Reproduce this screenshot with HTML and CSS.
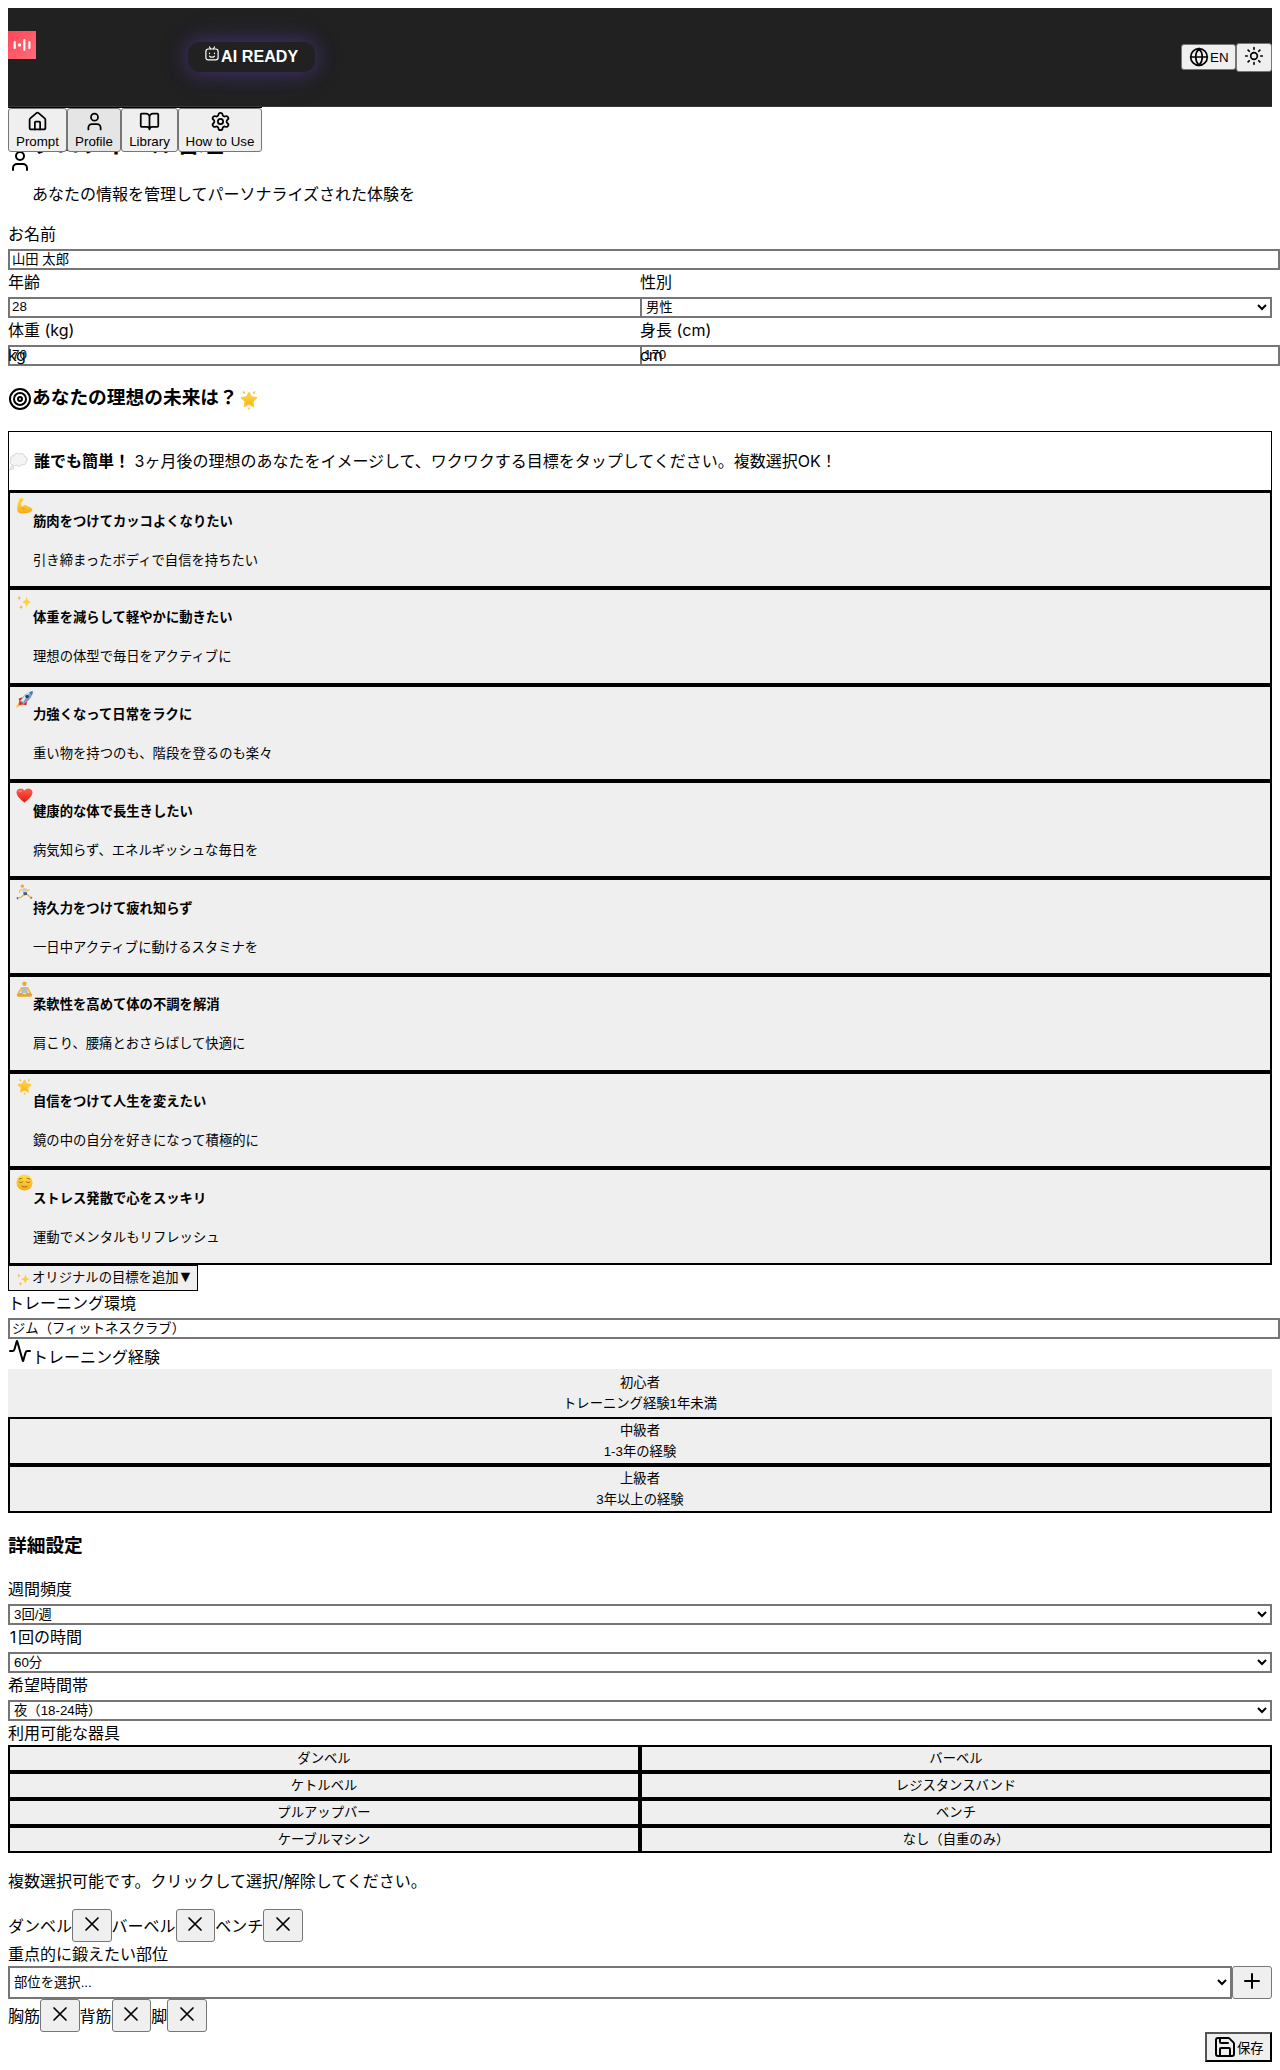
FILE: index.html
```html
<!DOCTYPE html>
<html lang="ja">
<head>
<meta charset="utf-8">
<title>プロフィール管理</title>
<link rel="stylesheet" href="styles.css">
</head>
<body>
<svg class="defs" aria-hidden="true">
  <defs>
    <linearGradient id="gold" x1="0" y1="0" x2="0" y2="1"><stop offset="0" stop-color="#ffe14d"/><stop offset="1" stop-color="#f9a816"/></linearGradient>
    <linearGradient id="logo" x1="0" y1="0" x2="1" y2="1"><stop offset="0" stop-color="#ff4757"/><stop offset="1" stop-color="#ff6b7a"/></linearGradient>
    <linearGradient id="red" x1="0" y1="0" x2="0" y2="1"><stop offset="0" stop-color="#ff6150"/><stop offset="1" stop-color="#e01a12"/></linearGradient>
  </defs>
  <symbol id="user" viewBox="0 0 24 24"><path d="M19 21v-2a4 4 0 0 0-4-4H9a4 4 0 0 0-4 4v2"/><circle cx="12" cy="7" r="4"/></symbol>
  <symbol id="close" viewBox="0 0 24 24"><path d="M18 6 6 18M6 6l12 12"/></symbol>
  <symbol id="star" viewBox="0 0 20 20"><path d="M10 2.800l2.300 4.300 5 .8-3.600 3.500.8 5L10 14.100l-4.500 2.300.8-5-3.600-3.500 5-.8z" fill="url(#gold)" stroke="#ffc83a" stroke-width="1.600" stroke-linejoin="round"/><path d="M4.500 2l.7 1.200M15.500 2l-.7 1.200M10 18.200v.6" stroke="#f8b62c" stroke-width="1.500" stroke-linecap="round"/></symbol>
  <symbol id="sparkles" viewBox="0 0 20 20"><path d="M12.500 2c.6 5 1.700 6.500 6 7.500-4.300 1-5.400 2.500-6 7.500-.6-5-1.700-6.500-6-7.500 4.300-1 5.400-2.500 6-7.500z" fill="#ffcf3d"/><path d="M3.800 1.500c.3 2.200.8 2.800 2.700 3.300-1.900.5-2.400 1.100-2.700 3.300-.3-2.200-.8-2.800-2.700-3.300 1.900-.5 2.400-1.100 2.700-3.300zM6 12.500c.3 2 .8 2.600 2.600 3-1.800.4-2.300 1-2.600 3-.3-2-.8-2.600-2.600-3 1.800-.4 2.300-1 2.600-3z" fill="#f9b44c"/></symbol>
  <symbol id="muscle" viewBox="0 0 20 20"><path d="M4.500 1.200c1.500-.8 4-.5 4.300.8.300 1.300-.5 2.800-2 2.700-.8 2.500-.7 5.300.3 7.300 1.500-3.200 5-3.500 6.300-1 2.900.3 5.900 2.200 6 5-2.700 2.600-6.800 3.500-10.900 3.500C4.500 19.500 1.700 18.500 1.500 15 1.300 10.500 2.500 5 4.500 1.200z" fill="url(#gold)"/><path d="M7 12c.7 1.400 1.700 2 3 2.200M5.500 4.200l1.500.5" fill="none" stroke="#d98612" stroke-width=".9"/></symbol>
  <symbol id="rocket" viewBox="0 0 20 20"><path d="M8 7L3 9l1.500 3zM13 12l-1 5-3.500-1.500z" fill="#c91d24"/><path d="M3.500 12.500L0 19.500l7.500-3z" fill="#ffb52c"/><path d="M5.500 12C8 6 12 1.200 19.800.3 19 8.500 14 12.500 8.500 15z" fill="#7c9dbb"/><path d="M6 12C9 6 12 3 16.500 1.200L8.500 13z" fill="#dce7ef"/><path d="M15.500 1.300l4.300-1-.9 4.800z" fill="#2d80bd"/><circle cx="13" cy="6.500" r="2" fill="#1d3d5c"/><path d="M4 10.500l5.500 5.500-6 .5z" fill="#df2d31"/></symbol>
  <symbol id="heart" viewBox="0 0 20 20"><path d="M10 18.500C6 15 1 11.300.6 6.500.3 1.600 7.500-.3 10 4.200 12.500-.3 19.700 1.600 19.400 6.500 19 11.300 14 15 10 18.500z" fill="url(#red)"/><ellipse cx="5" cy="5" rx="2.400" ry="1.300" fill="#ff9688" opacity=".7"/></symbol>
  <symbol id="runner" viewBox="0 0 20 20"><circle cx="7.500" cy="2.500" r="2" fill="#e8ae32"/><path d="M7 5.500l4-1 2 6-4.500 1z" fill="#c6d0dc"/><path d="M7 6L4 8.500l.5 2M11 5.500l2.500 2.500L16 6.500" fill="none" stroke="#f4b942" stroke-width="1.300"/><path d="M8.500 10l4-.5 1 3-4.500 1z" fill="#4c5874"/><path d="M9 13l-3.500 3H2M13 12.500l4.500 3.500" fill="none" stroke="#f1b23c" stroke-width="1.500"/><path d="M1.500 15.500l.5 2.500M17 17l2-1.500" stroke="#53699e" stroke-width="1.600"/></symbol>
  <symbol id="yoga" viewBox="0 0 20 20"><circle cx="10" cy="3.300" r="2.600" fill="#e9ac2c"/><path d="M7 7h6l1 7H6z" fill="#b4bdc7"/><path d="M7 7.500L2.500 15M13 7.500l4.500 7.500" stroke="#efb23c" stroke-width="2"/><path d="M1 15.500c4-2 6-1.500 9 .3 3-1.800 5-2.300 9-.3.500 2-1 3-3.500 3h-11C2 18.500.5 17.500 1 15.500z" fill="#e6a52c"/></symbol>
  <symbol id="calm" viewBox="0 0 20 20"><circle cx="10" cy="10" r="9.500" fill="url(#gold)"/><path d="M3.800 6L7 5M16.200 6L13 5M3.500 9c1.300 1.500 3 1.500 4.500 0M12 9c1.500 1.500 3.200 1.500 4.500 0M7 14.500c2 1 4 1 6 0" fill="none" stroke="#9a6a14" stroke-width="1.100" stroke-linecap="round"/></symbol>
  <symbol id="thought" viewBox="0 0 20 20"><g fill="#f4f4f4" stroke="#c6c6c9" stroke-width=".8"><path d="M4 14C1 14 .5 10.500 2.200 9.300.8 6.500 3 4 5.200 4.500 6 1.500 9.500 1 11 3c2-1.800 5.300-.5 5.300 2.300 3 .2 3.800 4 1.600 5.700.3 2.600-2.400 3.600-4.200 2.700-1.500 2.200-4.500 2.100-5.700.5C6.600 15.500 4.800 15.300 4 14z"/><circle cx="3.300" cy="17" r="1.500"/><circle cx="1.200" cy="19" r=".6"/></g></symbol>
</svg>

<header class="header">
  <svg class="logo" viewBox="0 0 28 28"><path fill="url(#logo)" d="M0 0h28v28H0z"/><path d="M6.700 11v6M16.300 9.200v9.600M21.400 11v6" stroke="#fff" stroke-width="2.200" stroke-linecap="round"/><circle cx="11.500" cy="14" r="1.700" fill="#fff"/></svg>
  <div class="status"><svg class="bot" viewBox="0 0 14 15"><rect x=".9" y="3" width="12.200" height="10.800" rx="2.400"/><path d="M4.500 1l1 1.700M9.500 1l-1 1.700M4.500 7.200v.4M9.500 7.200v.4M4.600 10.200c1.400 1.200 3.400 1.200 4.800 0"/></svg>AI READY</div>
  <div class="tools">
    <button class="btn lang"><svg class="icon s20" viewBox="0 0 24 24"><circle cx="12" cy="12" r="10"/><path d="M12 2a14.500 14.500 0 0 0 0 20 14.500 14.500 0 0 0 0-20M2 12h20"/></svg>EN</button>
    <button class="btn theme"><svg class="icon s20" viewBox="0 0 24 24"><circle cx="12" cy="12" r="4"/><path d="M12 2v2M12 20v2M4.930 4.930l1.410 1.410M17.660 17.660l1.410 1.410M2 12h2M20 12h2M6.340 17.660l-1.410 1.410M19.070 4.930l-1.410 1.410"/></svg></button>
  </div>
</header>

<nav class="nav">
  <button class="btn tab tab-prompt"><svg class="icon" viewBox="0 0 24 24"><path d="M15 21v-8a1 1 0 0 0-1-1h-4a1 1 0 0 0-1 1v8"/><path d="M3 10a2 2 0 0 1 .709-1.528l7-5.999a2 2 0 0 1 2.582 0l7 5.999A2 2 0 0 1 21 10v9a2 2 0 0 1-2 2H5a2 2 0 0 1-2-2z"/></svg>Prompt</button>
  <button class="btn tab tab-profile active"><svg class="icon"><use href="#user"/></svg>Profile</button>
  <button class="btn tab tab-library"><svg class="icon" viewBox="0 0 24 24"><path d="M12 7v14M3 18a1 1 0 0 1-1-1V4a1 1 0 0 1 1-1h5a4 4 0 0 1 4 4 4 4 0 0 1 4-4h5a1 1 0 0 1 1 1v13a1 1 0 0 1-1 1h-6a3 3 0 0 0-3 3 3 3 0 0 0-3-3z"/></svg>Library</button>
  <button class="btn tab tab-help"><svg class="icon" viewBox="0 0 24 24"><path d="M9.671 4.136a2.340 2.340 0 0 1 4.659 0 2.340 2.340 0 0 0 3.319 1.915 2.340 2.340 0 0 1 2.330 4.033 2.340 2.340 0 0 0 0 3.831 2.340 2.340 0 0 1-2.330 4.033 2.340 2.340 0 0 0-3.319 1.915 2.340 2.340 0 0 1-4.659 0 2.340 2.340 0 0 0-3.320-1.915 2.340 2.340 0 0 1-2.330-4.033 2.340 2.340 0 0 0 0-3.831A2.340 2.340 0 0 1 6.350 6.051a2.340 2.340 0 0 0 3.319-1.915"/><circle cx="12" cy="12" r="3"/></svg>How to Use</button>
</nav>

<main class="page">
  <div class="intro">
    <svg class="icon s24"><use href="#user"/></svg>
    <div><h1>プロフィール管理</h1><p>あなたの情報を管理してパーソナライズされた体験を</p></div>
  </div>

  <div class="field"><label>お名前</label><input type="text" value="山田 太郎"></div>
  <div class="columns">
    <div class="field"><label>年齢</label><input type="text" value="28"></div>
    <div class="field"><label>性別</label><select><option>男性</option></select></div>
    <div class="field"><label>体重 (kg)</label><input type="text" value="70"><span class="unit">kg</span></div>
    <div class="field"><label>身長 (cm)</label><input type="text" value="170"><span class="unit">cm</span></div>
  </div>

  <h3 class="goals-title"><svg class="icon s24" viewBox="0 0 24 24"><circle cx="12" cy="12" r="10"/><circle cx="12" cy="12" r="6"/><circle cx="12" cy="12" r="2"/></svg>あなたの理想の未来は？<svg class="title-star"><use href="#star"/></svg></h3>
  <div class="hint"><svg><use href="#thought"/></svg><p><strong>誰でも簡単！</strong> 3ヶ月後の理想のあなたをイメージして、ワクワクする目標をタップしてください。複数選択OK！</p></div>
  <div class="goals">
    <button class="goal"><svg><use href="#muscle"/></svg><span><b>筋肉をつけてカッコよくなりたい</b><small>引き締まったボディで自信を持ちたい</small></span></button>
    <button class="goal"><svg><use href="#sparkles"/></svg><span><b>体重を減らして軽やかに動きたい</b><small>理想の体型で毎日をアクティブに</small></span></button>
    <button class="goal"><svg><use href="#rocket"/></svg><span><b>力強くなって日常をラクに</b><small>重い物を持つのも、階段を登るのも楽々</small></span></button>
    <button class="goal"><svg><use href="#heart"/></svg><span><b>健康的な体で長生きしたい</b><small>病気知らず、エネルギッシュな毎日を</small></span></button>
    <button class="goal"><svg><use href="#runner"/></svg><span><b>持久力をつけて疲れ知らず</b><small>一日中アクティブに動けるスタミナを</small></span></button>
    <button class="goal"><svg><use href="#yoga"/></svg><span><b>柔軟性を高めて体の不調を解消</b><small>肩こり、腰痛とおさらばして快適に</small></span></button>
    <button class="goal"><svg><use href="#star"/></svg><span><b>自信をつけて人生を変えたい</b><small>鏡の中の自分を好きになって積極的に</small></span></button>
    <button class="goal"><svg><use href="#calm"/></svg><span><b>ストレス発散で心をスッキリ</b><small>運動でメンタルもリフレッシュ</small></span></button>
  </div>
  <button class="custom"><svg><use href="#sparkles"/></svg>オリジナルの目標を追加<span>▼</span></button>

  <div class="field"><label>トレーニング環境</label><input type="text" value="ジム（フィットネスクラブ）"></div>
  <div class="exp-label"><svg class="icon s24" viewBox="0 0 24 24"><path d="M22 12h-2.480a2 2 0 0 0-1.930 1.460l-2.350 8.360a.25.25 0 0 1-.48 0L9.240 2.180a.25.25 0 0 0-.48 0l-2.350 8.360A2 2 0 0 1 4.490 12H2"/></svg>トレーニング経験</div>
  <div class="levels">
    <button class="level selected"><span>初心者</span><span>トレーニング経験1年未満</span></button>
    <button class="level"><span>中級者</span><span>1-3年の経験</span></button>
    <button class="level"><span>上級者</span><span>3年以上の経験</span></button>
  </div>

  <h3 class="details-title">詳細設定</h3>
  <div class="field"><label>週間頻度</label><select><option>3回/週</option></select></div>
  <div class="field"><label><span class="digit">1</span>回の時間</label><select><option>60分</option></select></div>
  <div class="field"><label>希望時間帯</label><select><option>夜（18-24時）</option></select></div>
  <div class="plain-label">利用可能な器具</div>
  <div class="equipment">
    <button>ダンベル</button><button>バーベル</button>
    <button>ケトルベル</button><button>レジスタンスバンド</button>
    <button>プルアップバー</button><button>ベンチ</button>
    <button>ケーブルマシン</button><button>なし（自重のみ）</button>
  </div>
  <p class="note">複数選択可能です。クリックして選択/解除してください。</p>
  <div class="chips">
    <span>ダンベル</span><button class="btn"><svg class="icon s24 thin"><use href="#close"/></svg></button>
    <span>バーベル</span><button class="btn"><svg class="icon s24 thin"><use href="#close"/></svg></button>
    <span>ベンチ</span><button class="btn"><svg class="icon s24 thin"><use href="#close"/></svg></button>
  </div>
  <div class="plain-label">重点的に鍛えたい部位</div>
  <div class="adder"><select><option>部位を選択...</option></select><button class="btn"><svg class="icon s24" viewBox="0 0 24 24"><path d="M5 12h14M12 5v14"/></svg></button></div>
  <div class="chips">
    <span>胸筋</span><button class="btn"><svg class="icon s24 thin"><use href="#close"/></svg></button>
    <span>背筋</span><button class="btn"><svg class="icon s24 thin"><use href="#close"/></svg></button>
    <span>脚</span><button class="btn"><svg class="icon s24 thin"><use href="#close"/></svg></button>
  </div>
  <div class="actions"><button class="save"><svg class="icon s24" viewBox="0 0 24 24"><path d="M15.200 3a2 2 0 0 1 1.400.6l3.800 3.800a2 2 0 0 1 .6 1.400V19a2 2 0 0 1-2 2H5a2 2 0 0 1-2-2V5a2 2 0 0 1 2-2z"/><path d="M17 21v-7a1 1 0 0 0-1-1H8a1 1 0 0 0-1 1v7M7 3v4a1 1 0 0 0 1 1h7"/></svg>保存</button></div>
</main>
</body>
</html>
```

FILE: styles.css
```css
body {
  margin: 0;
  padding: 8px;
  background: #fff;
  color: #000;
  font: 16px/24px Inter, "Noto Sans CJK JP", sans-serif;
}
.defs { position: absolute; width: 0; height: 0; }
svg { flex: none; }
.icon {
  width: 21px;
  height: 21px;
  fill: none;
  stroke: currentColor;
  stroke-width: 2;
  stroke-linecap: round;
  stroke-linejoin: round;
}
.s20 { width: 20px; height: 20px; }
.s24 { width: 24px; height: 24px; }
.thin { stroke-width: 1.7; }
button, input, select {
  margin: 0;
  color: #000;
  font: 13.333px "Liberation Sans", "Noto Sans CJK JP", sans-serif;
}
button { box-sizing: border-box; background: #efefef; border-radius: 0; }
.btn { border: 1px solid #767676; border-radius: 3px; }

/* Header */
.header {
  display: flex;
  align-items: center;
  box-sizing: border-box;
  height: 99px;
  background: #212121;
  border-bottom: 1px solid #383838;
}
.logo { width: 28px; height: 28px; margin-bottom: 24px; }
.status {
  display: flex;
  align-items: center;
  box-sizing: border-box;
  width: 127px;
  height: 30px;
  margin-left: 152px;
  padding: 0 16px 0 17px;
  border-radius: 12px;
  background: #212121;
  color: #fff;
  font: bold 16px "Liberation Sans", sans-serif;
  letter-spacing: .1px;
  white-space: nowrap;
  box-shadow: 0 0 20px rgba(108, 70, 215, .45), 0 0 40px rgba(108, 70, 215, .1);
}
.bot { width: 14px; height: 15px; margin: 0 2px 7px 0; fill: none; stroke: #fff; stroke-width: 1.2; stroke-linecap: round; }
.tools { display: flex; align-items: center; margin-left: auto; }
.lang { display: flex; align-items: center; gap: 1px; width: 55px; height: 26px; padding: 0 7px; }
.theme { width: 36px; height: 29px; padding: 0 0 2px; display: flex; align-items: center; justify-content: center; }

/* Tab bar sits above the page title */
.nav {
  position: relative;
  z-index: 1;
  display: flex;
  width: 254px;
  height: 44px;
  border-top: 1px solid #000;
}
.tab {
  display: flex;
  flex-direction: column;
  align-items: center;
  height: 44px;
  padding: 2px 0 0;
  line-height: 18px;
  white-space: nowrap;
}
.tab .icon { margin-bottom: 1px; }
.tab-prompt { width: 59px; }
.tab-profile { width: 54px; }
.tab-library { width: 57px; }
.tab-help { width: 84px; }
.active { background: #e5e5e5; }

/* Page */
.page { margin-top: -21px; }
.intro { display: flex; height: 91px; }
.intro .icon { margin-top: 18px; }
h1 { margin: 0; padding-top: 1px; font-size: 24px; line-height: 24px; }
.intro p { margin: 26px 0 0; }
.field { position: relative; height: 48px; }
.field label { display: block; height: 27px; line-height: 24px; }
.digit { display: inline-block; width: 10px; text-align: center; }
input {
  display: block;
  box-sizing: border-box;
  width: calc(100% + 8px);
  height: 21px;
  padding: 0 2px 2px;
  border: 2px solid #767676;
  background: #fff;
}
select { display: block; box-sizing: border-box; width: 100%; height: 21px; padding: 0; border: 2px solid #767676; border-radius: 0; background: #fff; }
.columns { display: grid; grid-template-columns: 1fr 1fr; }
.columns select { position: relative; }
.unit { position: absolute; left: 0; top: 25px; letter-spacing: -.3px; }
h3 { margin: 0; font-size: 18.72px; line-height: 28px; }
.goals-title { display: flex; align-items: center; height: 28px; margin: 18px 0 19px; }
.goals-title .icon { margin-top: 2px; }
.title-star { width: 20px; height: 20px; margin: 3px 0 0 1px; }
.hint { display: flex; align-items: center; height: 58px; border: 1px solid #000; }
.hint svg { width: 19px; height: 20px; margin-right: 6px; }
.hint p { margin: 0; }
.goals { display: grid; grid-auto-rows: 96.75px; }
.goal { display: flex; align-items: flex-start; padding: 1px 6px; border: 2px solid #000; text-align: left; }
.goal svg { width: 17px; height: 17px; margin-top: 3px; }
.goal span { display: flex; flex-direction: column; gap: 19px; margin-top: 17.500px; line-height: 20px; }
.goal small { font-size: 13.333px; }
.custom { display: flex; align-items: center; width: 190px; height: 26px; padding: 0 6px 3px; border: 1px solid #000; white-space: nowrap; }
.custom svg { width: 15px; height: 15px; margin: 5px 1px 0 1px; }
.custom span { font-size: 16px; line-height: 16px; margin-left: -1px; }
.exp-label { display: flex; height: 30px; line-height: 36px; }
.levels { display: grid; grid-auto-rows: 48px; }
.level { display: flex; flex-direction: column; align-items: center; justify-content: center; padding: 0; border: 2px solid #000; line-height: 21px; }
.selected { border-color: #efefef; }
.details-title { margin: 18px 0; padding-top: 1px; line-height: 27px; }
.plain-label { height: 24px; }
.equipment { display: grid; grid-template-columns: 1fr 1fr; grid-auto-rows: 27px; }
.equipment button { padding: 0 0 2px; border: 2px solid #000; }
.note { margin: 16px 0; }
.chips { display: flex; height: 33px; align-items: center; }
.chips .btn, .adder .btn { width: 39.6px; height: 33px; padding: 0 0 3px; display: flex; align-items: center; justify-content: center; }
.adder { display: flex; }
.adder select { height: 33px; }
.adder .btn { flex: none; }
.actions { display: flex; justify-content: flex-end; }
.save { display: flex; align-items: center; width: 67px; height: 30px; padding: 0 6px; border: 2px outset #000; white-space: nowrap; }
```
